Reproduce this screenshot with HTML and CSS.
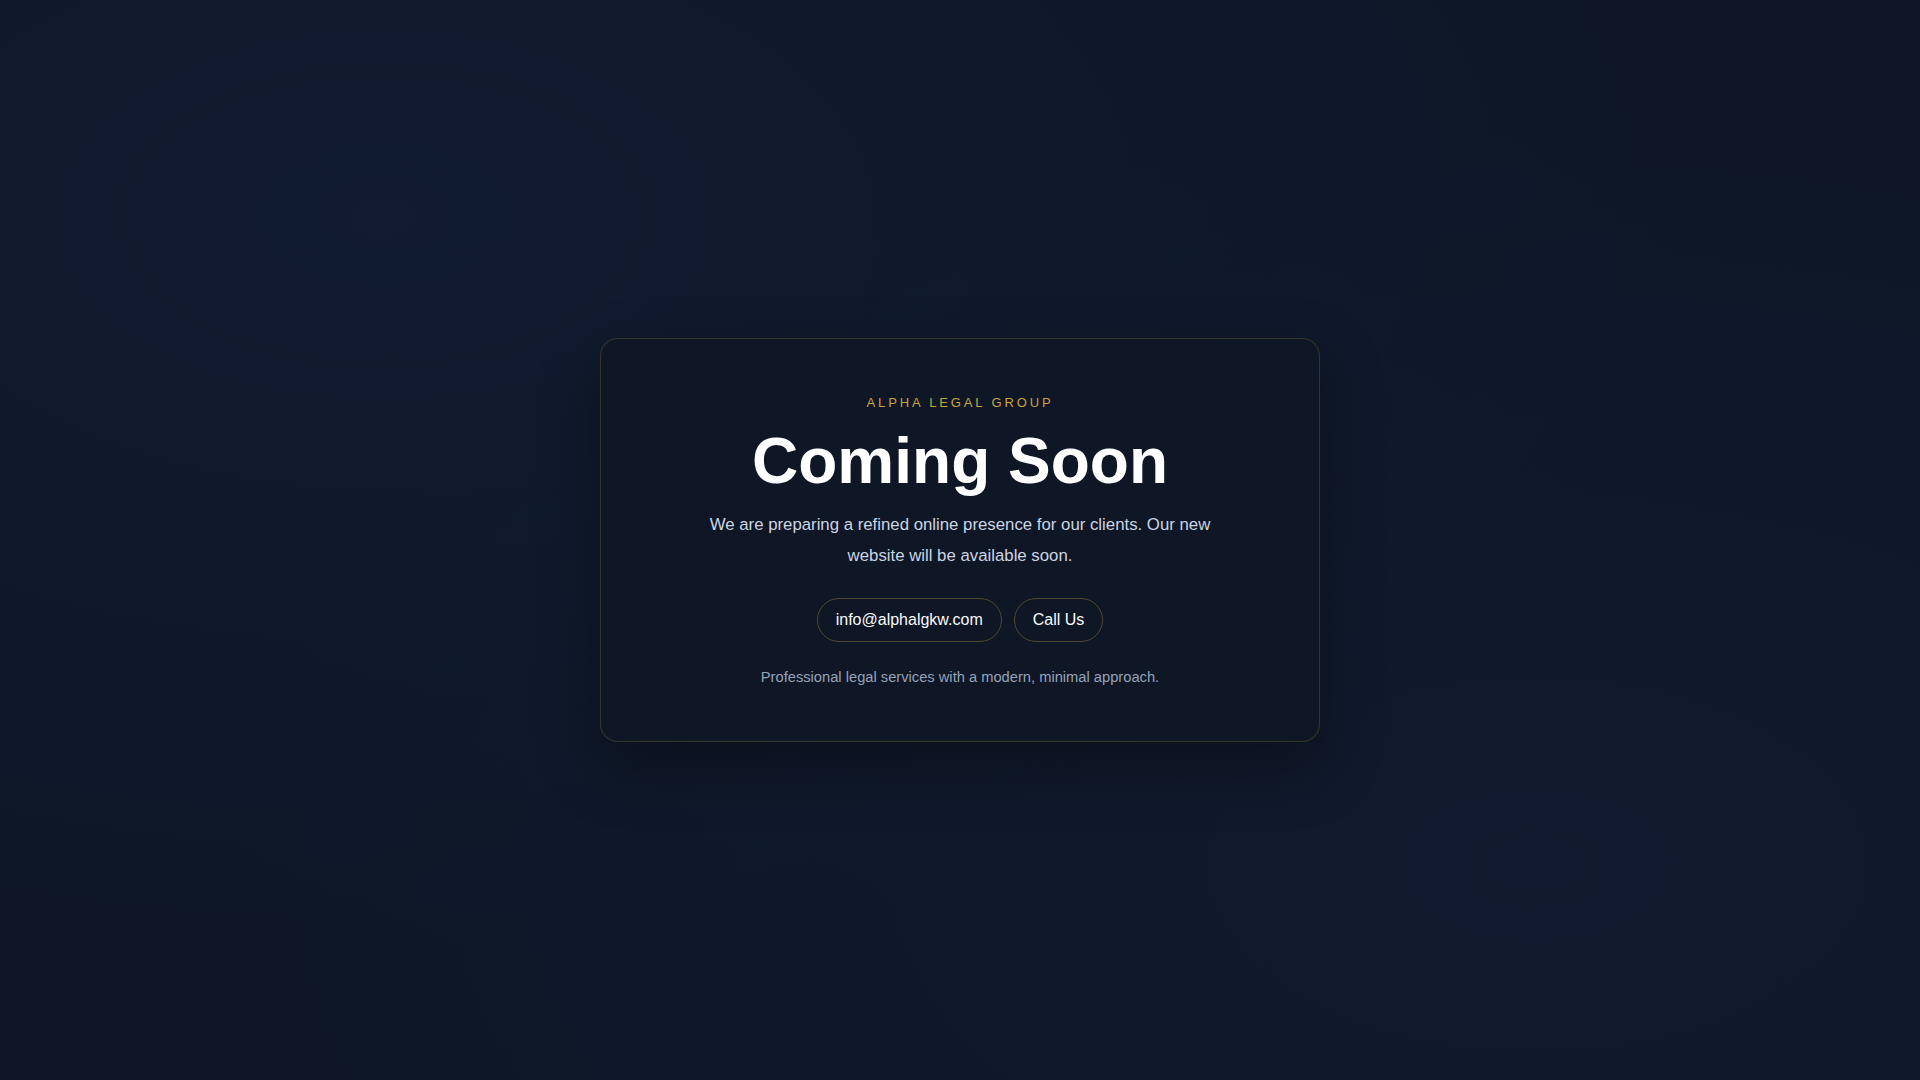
FILE: index.html
```html
<!DOCTYPE html>
<html lang="en">
<head>
<meta charset="utf-8">
<title>Alpha Legal Group — Coming Soon</title>
<link rel="stylesheet" href="styles.css">
</head>
<body>
<main class="page">
  <section class="card">
    <p class="eyebrow">ALPHA LEGAL GROUP</p>
    <h1 class="title">Coming Soon</h1>
    <p class="lead">We are preparing a refined online presence for our clients. Our new website will be available soon.</p>
    <div class="actions">
      <a class="pill" href="#">info@alphalgkw.com</a>
      <a class="pill" href="#">Call Us</a>
    </div>
    <p class="note">Professional legal services with a modern, minimal approach.</p>
  </section>
</main>
</body>
</html>
```
FILE: styles.css
```css
* { box-sizing: border-box; }
html, body { margin: 0; height: 100%; }
body {
  font-family: "Liberation Sans", Arial, sans-serif;
  background-color: #0e1628;
  background-image:
    radial-gradient(ellipse at 20% 20%, rgba(20, 30, 52, 0.6), transparent 60%),
    radial-gradient(ellipse at 80% 80%, rgba(20, 30, 52, 0.5), transparent 60%);
  color: #f1f5f9;
}
.page {
  min-height: 100vh;
  display: flex;
  align-items: center;
  justify-content: center;
  padding: 24px;
}
.card {
  width: 720px;
  padding: 56px;
  border: 1px solid rgba(201, 162, 58, 0.22);
  border-radius: 18px;
  background: rgba(15, 22, 38, 0.85);
  box-shadow: 0 24px 60px rgba(0, 0, 0, 0.35);
  text-align: center;
}
.eyebrow {
  margin: 0;
  font-size: 13px;
  letter-spacing: 0.22em;
  color: #c9a33a;
}
.title {
  margin: 16px 0 0;
  font-size: 64px;
  line-height: 1.1;
  font-weight: 700;
  color: #ffffff;
}
.lead {
  margin: 14px auto 0;
  max-width: 520px;
  font-size: 16.8px;
  line-height: 1.8;
  color: #cbd5e1;
}
.actions {
  margin-top: 27px;
  display: flex;
  justify-content: center;
  gap: 12px;
}
.pill {
  display: inline-block;
  padding: 12px 18px;
  border: 1px solid rgba(201, 162, 58, 0.35);
  border-radius: 999px;
  font-size: 16px;
  line-height: 18px;
  color: #f8fafc;
  text-decoration: none;
}
.note {
  margin: 27px 0 0;
  font-size: 14.7px;
  color: #94a3b8;
}
```
